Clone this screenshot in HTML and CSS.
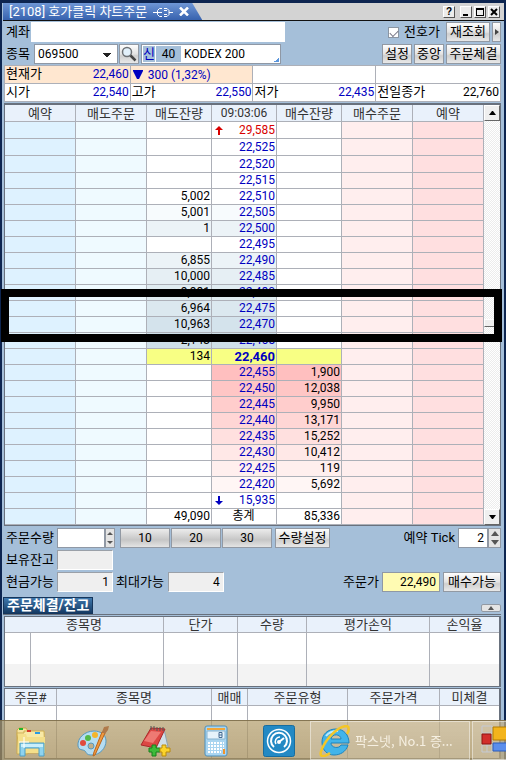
FILE: index.html
```
<!DOCTYPE html>
<html lang="ko">
<head>
<meta charset="utf-8">
<title>[2108] 호가클릭 차트주문</title>
<link rel="stylesheet" href="styles.css">
</head>
<body>
<main class="window">
  <header class="titlebar">
    <div class="tab">
      <h1>[2108] 호가클릭 차트주문</h1>
      <svg class="plug" viewBox="0 0 20 12" width="20" height="12" fill="none" stroke="#fff"><path d="M0 6.500h4M9 2.500H6.500L4.500 4.500v4l2 2H9M9 6.500H5M11 2.500h3l2 2v4l-2 2h-3M11 4.500h3M11 8.500h3M16 6.500h4"/></svg>
      <button class="tab-close" aria-label="탭 닫기"><svg viewBox="0 0 10 9" width="10" height="9" stroke="#fff" stroke-width="2.500"><path d="M1 0.500l8 8M9 0.500l-8 8"/></svg></button>
    </div>
    <div class="winbuttons">
      <button class="wb help" aria-label="도움말">?</button>
      <button class="wb" aria-label="최소화"><svg viewBox="0 0 10 10" width="10" height="10"><path d="M2 7h5v2H2z"/></svg></button>
      <button class="wb" aria-label="최대화"><svg viewBox="0 0 10 10" width="10" height="10"><path d="M1 1h8v8H1zM2 3v5h6V3z" fill-rule="evenodd"/></svg></button>
      <button class="wb" aria-label="닫기"><svg viewBox="0 0 10 10" width="10" height="10" stroke="#000" stroke-width="2"><path d="M2 2l6 6M8 2l-6 6"/></svg></button>
    </div>
  </header>

  <section class="search">
    <div class="line">
      <label class="w-short" for="acct">계좌</label>
      <input id="acct" class="account" type="text">
      <span class="spacer"></span>
      <label class="check"><input type="checkbox" checked>전호가</label>
      <button class="btn b3">재조회</button>
      <button class="btn more" aria-label="더보기"><svg viewBox="0 0 4 6" width="4" height="6"><path d="M0 0l4 3-4 3z" fill="#444"/></svg></button>
    </div>
    <div class="line">
      <label class="w-code" for="code">종목</label>
      <select id="code" class="code"><option>069500</option></select>
      <button class="btn find" aria-label="종목 찾기"><svg viewBox="0 0 18 18" width="18" height="18"><circle cx="7" cy="7" r="4.500" fill="#e2f0fa" stroke="#6e7276" stroke-width="1.500"/><path d="M10.500 10.500l5 5" stroke="#444" stroke-width="2.500"/></svg></button>
      <div class="stock"><span class="kind">신</span><span class="margin">40</span><span>KODEX 200</span></div>
      <span class="spacer"></span>
      <button class="btn b2">설정</button>
      <button class="btn b2">중앙</button>
      <button class="btn b4">주문체결</button>
    </div>
  </section>

  <dl class="quote">
    <div class="q cream"><dt>현재가</dt><dd>22,460</dd></div>
    <div class="q cream start"><svg viewBox="0 0 10 9" width="10" height="9"><path d="M0 0h10v1L6 9H4L0 1z" fill="#0000c0"/></svg><dd>300 (1,32%)</dd></div>
    <div class="q"></div>
    <div class="q"></div>
    <div class="q"><dt>시가</dt><dd>22,540</dd></div>
    <div class="q"><dt>고가</dt><dd>22,550</dd></div>
    <div class="q"><dt>저가</dt><dd>22,435</dd></div>
    <div class="q"><dt>전일종가</dt><dd class="black">22,760</dd></div>
  </dl>

  <section class="ladder">
    <table class="book">
      <colgroup><col class="c71"><col class="c71"><col class="c65"><col class="c65"><col class="c65"><col class="c71"><col class="c71"></colgroup>
      <thead><tr><th>예약</th><th>매도주문</th><th>매도잔량</th><th class="time">09:03:06</th><th>매수잔량</th><th>매수주문</th><th>예약</th></tr></thead>
      <tbody>
        <tr class="tall"><td></td><td></td><td></td><td class="up"><svg viewBox="0 0 8 9" width="8" height="9"><path d="M4 0l4 4H5v5H3V4H0z" fill="#d80000"/></svg>29,585</td><td></td><td></td><td></td></tr>
        <tr class="tall"><td></td><td></td><td></td><td>22,525</td><td></td><td></td><td></td></tr>
        <tr class="tall"><td></td><td></td><td></td><td>22,520</td><td></td><td></td><td></td></tr>
        <tr><td></td><td></td><td></td><td>22,515</td><td></td><td></td><td></td></tr>
        <tr><td></td><td></td><td>5,002</td><td>22,510</td><td></td><td></td><td></td></tr>
        <tr class="s1"><td></td><td></td><td>5,001</td><td>22,505</td><td></td><td></td><td></td></tr>
        <tr class="s2"><td></td><td></td><td>1</td><td>22,500</td><td></td><td></td><td></td></tr>
        <tr><td></td><td></td><td></td><td>22,495</td><td></td><td></td><td></td></tr>
        <tr class="s2"><td></td><td></td><td>6,855</td><td>22,490</td><td></td><td></td><td></td></tr>
        <tr class="s3"><td></td><td></td><td>10,000</td><td>22,485</td><td></td><td></td><td></td></tr>
        <tr class="s4"><td></td><td></td><td>9,981</td><td>22,480</td><td></td><td></td><td></td></tr>
        <tr class="s5"><td></td><td></td><td>6,964</td><td>22,475</td><td></td><td></td><td></td></tr>
        <tr class="s6"><td></td><td></td><td>10,963</td><td>22,470</td><td></td><td></td><td></td></tr>
        <tr class="s7"><td></td><td></td><td>2,143</td><td>22,465</td><td></td><td></td><td></td></tr>
        <tr class="now"><td></td><td></td><td>134</td><td>22,460</td><td></td><td></td><td></td></tr>
        <tr class="b1"><td></td><td></td><td></td><td>22,455</td><td>1,900</td><td></td><td></td></tr>
        <tr class="b2nd"><td></td><td></td><td></td><td>22,450</td><td>12,038</td><td></td><td></td></tr>
        <tr class="b3rd"><td></td><td></td><td></td><td>22,445</td><td>9,950</td><td></td><td></td></tr>
        <tr class="b4th"><td></td><td></td><td></td><td>22,440</td><td>13,171</td><td></td><td></td></tr>
        <tr class="b5th"><td></td><td></td><td></td><td>22,435</td><td>15,252</td><td></td><td></td></tr>
        <tr class="b6th"><td></td><td></td><td></td><td>22,430</td><td>10,412</td><td></td><td></td></tr>
        <tr class="b7th"><td></td><td></td><td></td><td>22,425</td><td>119</td><td></td><td></td></tr>
        <tr class="b8th"><td></td><td></td><td></td><td>22,420</td><td>5,692</td><td></td><td></td></tr>
        <tr><td></td><td></td><td></td><td><svg viewBox="0 0 8 9" width="8" height="9"><path d="M4 9l4-4H5V0H3v5H0z" fill="#0000c0"/></svg>15,935</td><td></td><td></td><td></td></tr>
        <tr class="total"><td></td><td></td><td>49,090</td><td>총계</td><td>85,336</td><td></td><td></td></tr>
      </tbody>
    </table>
    <div class="scroll">
      <button class="sb" aria-label="위로"><svg viewBox="0 0 7 4" width="7" height="4"><path d="M3 0h1l3 4H0z"/></svg></button>
      <span class="thumb"></span>
      <button class="sb" aria-label="아래로"><svg viewBox="0 0 7 4" width="7" height="4"><path d="M0 0h7L4 4H3z"/></svg></button>
    </div>
    <div class="marker"></div>
  </section>

  <section class="order">
    <div class="line">
      <label class="w-label" for="qty">주문수량</label>
      <input id="qty" class="field qty" type="text">
      <span class="spin"><button aria-label="수량 증가"><svg viewBox="0 0 6 3" width="6" height="3"><path d="M3 0l3 3H0z"/></svg></button><button aria-label="수량 감소"><svg viewBox="0 0 6 3" width="6" height="3"><path d="M0 0h6L3 3z"/></svg></button></span>
      <span class="presets"><button class="btn">10</button><button class="btn">20</button><button class="btn">30</button></span>
      <button class="btn b4 after">수량설정</button>
      <span class="spacer"></span>
      <label class="w-gap" for="tick">예약 Tick</label>
      <input id="tick" class="field tick" type="text" value="2">
      <span class="spin big"><button aria-label="Tick 증가"><svg viewBox="0 0 8 5" width="8" height="5"><path d="M4 0l4 5H0z"/></svg></button><button aria-label="Tick 감소"><svg viewBox="0 0 8 5" width="8" height="5"><path d="M0 0h8L4 5z"/></svg></button></span>
    </div>
    <div class="line">
      <label class="w-label" for="held">보유잔고</label>
      <input id="held" class="field gray" type="text" readonly>
    </div>
    <div class="line">
      <label class="w-label" for="cash">현금가능</label>
      <input id="cash" class="field gray" type="text" value="1" readonly>
      <label class="w-max" for="max">최대가능</label>
      <input id="max" class="field gray" type="text" value="4" readonly>
      <span class="spacer"></span>
      <label class="w-gap" for="price">주문가</label>
      <input id="price" class="field price" type="text" value="22,490">
      <button class="btn buy">매수가능</button>
    </div>
  </section>

  <section class="balance">
    <div class="subhead">
      <h2>주문체결/잔고</h2>
      <button class="fold" aria-label="접기"><svg viewBox="0 0 6 4" width="6" height="4"><path d="M3 0l3 4H0z" fill="#555"/></svg></button>
    </div>
    <table class="list">
      <colgroup><col class="p26"><col class="p133"><col class="p74"><col class="p69"><col class="p123"><col class="p69"></colgroup>
      <thead><tr><th colspan="2">종목명</th><th>단가</th><th>수량</th><th>평가손익</th><th>손익율</th></tr></thead>
      <tbody>
        <tr class="r1"><td></td><td></td><td></td><td></td><td></td><td></td></tr>
        <tr class="r2"><td></td><td></td><td></td><td></td><td></td><td></td></tr>
      </tbody>
    </table>
    <table class="list orders">
      <colgroup><col class="p52"><col class="p155"><col class="p36"><col class="p100"><col class="p92"><col class="p59"></colgroup>
      <thead><tr><th>주문#</th><th>종목명</th><th>매매</th><th>주문유형</th><th>주문가격</th><th>미체결</th></tr></thead>
      <tbody><tr class="r3"><td></td><td></td><td></td><td></td><td></td><td></td></tr></tbody>
    </table>
  </section>
</main>

<nav class="taskbar">
  <button class="app" aria-label="파일 탐색기">
    <svg viewBox="0 0 32 32" width="32" height="32"><path d="M2 5l2-2h7l2 3v23H2z" fill="#f5e3a0" stroke="#c9a94e"/><path d="M9 6h20l1 22H4L2 8h7z" fill="#f8e9a6" stroke="#cfae50"/><path d="M3 9h8l1 3h18v16H3z" fill="#f4df8a"/><path d="M4 3h4v2H4z" fill="#22b52c"/><path d="M12 5h4v2h-4z" fill="#d8392b"/><path d="M20 7h5v2h-5z" fill="#2a9be0"/><path d="M5 18h24v13h-5v-8H10v8H5z" fill="#8fd3ee" stroke="#4e9fc4"/><path d="M6 19h22v3H6z" fill="#c9effb"/><path d="M9 12v11M4 17h10" stroke="#fff"/></svg>
  </button>
  <button class="app" aria-label="그림판">
    <svg viewBox="0 0 32 32" width="32" height="32"><path d="M17 6C8 6 0 13 1 21c1 5 5 3 7 5s1 4 7 4c8 0 14-7 14-14 0-6-5-10-12-10zm-3 12a3 3 0 110 6 3 3 0 010-6z" fill="#b5ddf2" stroke="#5798bd" fill-rule="evenodd"/><circle cx="6" cy="18" r="3" fill="#e04a3c"/><circle cx="11" cy="13" r="3" fill="#54b948"/><circle cx="18" cy="10" r="3" fill="#f4b52b"/><path d="M28 8l-10 22-2 1 1-4 8-20z" fill="#f19a3e" stroke="#b8651e"/><path d="M25 7l2-5 5-1-1 4-3 4z" fill="#b07a4a"/></svg>
  </button>
  <button class="app" aria-label="메모">
    <svg viewBox="0 0 32 32" width="32" height="32"><path d="M25 4l4 18-9 5-9-3z" fill="#cfdfe8" stroke="#8ba3b1"/><path d="M12 3l14 1-9 19-15-3z" fill="#dc4743" stroke="#a9282a"/><path d="M12 6l10 1-8 11-9-2z" fill="#ee7a73"/><path d="M12 1v4M15 1v4M18 2v4M21 2v4M24 2v4" stroke="#555"/><path d="M13 20h4v3h4v4h-4v4h-4v-4h-3v-4h3z" fill="#3dbb3a" stroke="#17801c"/><path d="M23 20h4v3h4v4h-4v4h-4v-4h-2v-4h2z" fill="#fbd42b" stroke="#b98b0d"/></svg>
  </button>
  <button class="app" aria-label="계산기">
    <svg viewBox="0 0 32 32" width="32" height="32"><rect x="4" y="1" width="22" height="30" rx="2" fill="#a9d5f0" stroke="#4d8fba"/><path d="M6 3h18v2H6z" fill="#f0a63a"/><path d="M6 6h18v8H6z" fill="#e6f3fb" stroke="#86b3d0"/><path d="M18 7.500h3v5h-3zM18 10h3" fill="none" stroke="#456b93"/><path d="M7 18h16M7 21h16M7 24h16M7 27h13" stroke="#fff" stroke-width="2" stroke-dasharray="2 1"/><path d="M22 24h2v5h-2z" fill="#f0932a"/></svg>
  </button>
  <button class="app" aria-label="성능 측정">
    <svg viewBox="0 0 32 32" width="32" height="32"><rect x="0.500" y="0.500" width="31" height="31" rx="2" fill="#2389c4" stroke="#176d9f"/><circle cx="16" cy="16" r="11.500" fill="none" stroke="#fff" stroke-width="1.500"/><path d="M11 22a8 8 0 1110 0" fill="none" stroke="#fff" stroke-width="2"/><path d="M13 19a4.500 4.500 0 014-7" fill="none" stroke="#fff" stroke-width="1.500"/><path d="M16 17l5-4" stroke="#fff" stroke-width="2"/><circle cx="16" cy="17" r="2" fill="#fff"/></svg>
  </button>
  <button class="task">
    <svg viewBox="0 0 32 32" width="32" height="32"><path d="M30 18H12c0 5 8 6 10 2h7c-2 7-8 10-14 10C8 30 3 25 3 17S9 4 17 4c8 0 13 6 13 14zM12 14h10c0-5-9-6-10 0z" fill="#42b4ea" stroke="#1d83bd" fill-rule="evenodd"/><path d="M7 11c3-4 7-5 12-5" stroke="#bdeafd" stroke-width="2" fill="none"/><path d="M11 28C4 33-1 32 3 24 7 14 18 2 27 1c4 0 3 5 1 8" stroke="#f4c628" stroke-width="2.500" fill="none"/></svg>
    <span>팍스넷, No.1 증...</span>
  </button>
  <button class="task cut" aria-label="프로그램">
    <svg viewBox="0 0 32 32" width="32" height="32"><path d="M1 1h10v7H1zM1 20h10v7H1zM6 20v7" fill="none" stroke="#c5cad4"/><path d="M1 9h9v10H1z" fill="#d22f2b" stroke="#8d1513"/><path d="M12 2h16v13H12z" fill="#f3b41c" stroke="#b27d05"/><path d="M12 18h16v8H12z" fill="#5b8eec" stroke="#2d5cbb"/></svg>
  </button>
</nav>
</body>
</html>
```
FILE: styles.css
```
* { box-sizing: border-box; }
body {
  margin: 0;
  overflow: hidden;
  background: #a5bfd9;
  color: #000;
  font: 13px/16px Roboto, "Noto Sans CJK KR", sans-serif;
}
button, input, select { font: inherit; color: inherit; margin: 0; padding: 0; border-radius: 0; }
h1, h2, dl, dt, dd { margin: 0; font: inherit; }
svg { display: block; flex: none; }

.window {
  min-height: 100vh;
  padding: 0 3px 0 2px;
  border: solid #0d2550;
  border-width: 3px 2px 0;
}

/* title bar */
.titlebar {
  display: flex;
  justify-content: space-between;
  align-items: center;
  height: 18px;
  margin: 0 -3px 0 -1px;
  background: #d3d3d3;
  border-bottom: 1px solid #111;
}
.tab {
  display: flex;
  align-items: center;
  height: 17px;
  padding: 0 13px 0 6px;
  color: #fff;
  background: linear-gradient(#6f97d6, #3762ae);
  clip-path: polygon(0 0, calc(100% - 10px) 0, 100% 100%, 0 100%);
}
.tab h1 { white-space: nowrap; }
.plug { margin: 0 6px; }
.tab-close { border: 0; background: none; }
.winbuttons { display: flex; gap: 2px; padding-right: 4px; }
.wb {
  display: grid;
  place-items: center;
  width: 12px;
  height: 12px;
  background: #ececec;
  border: 1px solid;
  border-color: #fff #555 #555 #fff;
}
.wb.help { margin-right: 3px; font: bold 10px/10px "Liberation Sans", sans-serif; }

/* rows of controls */
.line { display: flex; height: 20px; align-items: center; white-space: nowrap; }
.search { display: grid; gap: 2px; padding: 1px 0 1px 2px; }
.spacer { flex: 1; }
.w-short { width: 25px; }
.w-code { width: 28px; }
.account { width: 254px; height: 20px; border: 0; background: #fff; }
.check { display: flex; align-items: center; gap: 5px; margin-right: 6px; }
.check input {
  appearance: none;
  display: grid;
  place-items: center;
  width: 11px;
  height: 11px;
  border: 1px solid #8b96a3;
  background: #fff;
}
.check input:checked::before {
  content: "";
  width: 7px;
  height: 4px;
  border: solid #778;
  border-width: 0 0 1px 1px;
  transform: rotate(-45deg);
}
.btn {
  height: 20px;
  border: 1px solid #9299a3;
  background: linear-gradient(#fdfdfd, #e3e3e3 50%, #cfcfcf 60%, #e8e8e8);
  text-align: center;
  white-space: nowrap;
}
.b2 { width: 30px; margin-right: 2px; }
.b3 { width: 44px; margin-right: 2px; }
.b4 { width: 55px; }
.buy { width: 58px; }
.more { display: grid; place-items: center; width: 9px; }
.code {
  appearance: none;
  width: 84px;
  height: 20px;
  padding-left: 3px;
  border: 1px solid #8f98a5;
  background: #fff conic-gradient(from -45deg at 50% 100%, transparent 0) no-repeat;
  background-image: linear-gradient(45deg, transparent 50%, #222 50%), linear-gradient(-45deg, transparent 50%, #222 50%);
  background-position: 68px 8px, 72px 8px;
  background-size: 4px 4px;
  font-size: 12px;
}
.find { display: grid; place-items: center; width: 20px; margin: 0 2px 0 1px; }
.stock {
  display: flex;
  align-items: center;
  width: 140px;
  height: 20px;
  border: 1px solid #8f98a5;
  background: linear-gradient(135deg, transparent 50%, #5b96dd 50%) right 1px bottom 1px / 5px 5px no-repeat, #fff;
  font-size: 12px;
}
.stock span { height: 16px; }
.stock .kind { width: 12px; margin-left: 1px; background: #a5bfd9; color: #0000c0; font-size: 13px; }
.margin { width: 25px; margin: 0 3px 0 1px; background: #a5bfd9; text-align: center; }

/* quote summary */
.quote {
  display: grid;
  grid-template-columns: 126fr 123fr 123fr 125fr;
  gap: 1px;
  padding: 1px;
  background: #adb0b8;
}
.q {
  display: flex;
  justify-content: space-between;
  height: 17px;
  padding: 0 1px;
  background: #fff;
  color: #0000c0;
}
.q dd { font-size: 12px; }
.q dt, .black { color: #000; }
.cream { background: #ffe7d0; }
.start { justify-content: flex-start; align-items: center; gap: 5px; padding-left: 2px; }

/* price ladder */
.ladder {
  position: relative;
  display: flex;
  margin-top: 1px;
  border: 1px solid #69717d;
  border-top-width: 2px;
}
table { border-collapse: separate; border-spacing: 0; table-layout: fixed; }
.book { flex: 1; width: 0; }
th, td { padding: 0; border: solid #adb0b8; border-width: 0 1px 1px 0; line-height: 15px; }
th { height: 17px; background: #e9f1fb; color: #333; font-weight: normal; white-space: nowrap; }
.time { font-size: 12px; }
.book td { height: 16px; padding-right: 1px; background: #fff; text-align: right; font-size: 12px; }
.book .tall td { height: 17px; }
.c71 { width: 71px; }
.c65 { width: 65px; }
.book td:nth-child(1) { background: #def2ff; }
.book td:nth-child(2) { background: #effaff; }
.book td:nth-child(4) { color: #0000c0; }
.book td:nth-child(6) { background: #ffeeee; }
.book td:nth-child(7) { background: #ffdfe0; }
.book td.up:nth-child(4) { color: #d80000; }
.book td svg { float: left; margin: 3px 0 0 3px; }
.s1 td:nth-child(n+3):nth-child(-n+4) { background: #f7fbfd; }
.s2 td:nth-child(n+3):nth-child(-n+4) { background: #ecf3f7; }
.s3 td:nth-child(n+3):nth-child(-n+4) { background: #e6eff4; }
.s4 td:nth-child(n+3):nth-child(-n+4) { background: #e0ecf1; }
.s5 td:nth-child(n+3):nth-child(-n+4) { background: #dbe8ef; }
.s6 td:nth-child(n+3):nth-child(-n+4) { background: #d4e3ec; }
.s7 td:nth-child(n+3):nth-child(-n+4) { background: #cedfe9; }
.now td:nth-child(n+3):nth-child(-n+5) { background: #f8ff84; }
.book .now td:nth-child(4) { font-weight: bold; font-size: 13px; }
.b1 td:nth-child(n+4):nth-child(-n+5) { background: #ffbfbf; }
.b2nd td:nth-child(n+4):nth-child(-n+5) { background: #ffc6c5; }
.b3rd td:nth-child(n+4):nth-child(-n+5) { background: #ffcdcc; }
.b4th td:nth-child(n+4):nth-child(-n+5) { background: #ffd6d5; }
.b5th td:nth-child(n+4):nth-child(-n+5) { background: #ffe0df; }
.b6th td:nth-child(n+4):nth-child(-n+5) { background: #ffe8e7; }
.b7th td:nth-child(n+4):nth-child(-n+5) { background: #ffefee; }
.b8th td:nth-child(n+4):nth-child(-n+5) { background: #fff6f5; }
.book .total td:nth-child(4) { color: #000; text-align: center; }
.scroll {
  display: flex;
  flex-direction: column;
  justify-content: space-between;
  width: 16px;
  background: repeating-conic-gradient(#fff 0 25%, #ececec 0 50%) 0 0 / 2px 2px;
}
.sb, .thumb {
  display: grid;
  place-items: center;
  width: 16px;
  height: 16px;
  background: #efefef;
  border: 1px solid;
  border-color: #fff #666 #666 #fff;
}
.thumb { height: 8px; margin-top: 16px; }
.marker {
  position: absolute;
  top: 184px;
  left: -4px;
  right: -2px;
  height: 53px;
  border: 8px solid #000;
}

/* order entry */
.order { display: grid; gap: 2px; padding: 2px 0 5px 2px; }
.w-label { width: 51px; }
.w-max { margin: 0 4px 0 3px; }
.w-gap { margin-right: 3px; }
.field {
  width: 56px;
  height: 20px;
  padding: 0 3px;
  border: 1px solid #8f98a5;
  background: #fff;
  font-size: 12px;
  text-align: right;
}
.gray { background: #efefef; border-color: #9aa0a8 #fff #fff #9aa0a8; }
.qty { width: 48px; }
.tick { width: 30px; }
.price { width: 58px; margin-right: 3px; background: #fffbb3; }
.spin { display: grid; width: 10px; height: 20px; margin-right: 5px; border: 1px solid #9299a3; }
.spin button { display: grid; place-items: center; border: 0; background: #e4e4e4; }
.spin path { fill: #555; }
.spin.big { width: 13px; margin-right: 0; }
.presets { display: flex; gap: 1px; }
.presets .btn { width: 50px; background: linear-gradient(#ececec, #c6c6c6 60%, #e4e4e4); font-size: 12px; }
.after { margin-left: 3px; }

/* balances */
.subhead { display: flex; justify-content: space-between; align-items: flex-end; height: 18px; margin-left: -1px; border-bottom: 1px solid #69717d; }
h2 {
  height: 17px;
  padding: 0 3px;
  border: 1px solid #16365c;
  background: linear-gradient(#3f78ad, #153a63);
  color: #fff;
  font-size: 14px;
  font-weight: bold;
  line-height: 15px;
}
.fold {
  display: grid;
  place-items: center;
  width: 20px;
  height: 8px;
  margin-bottom: 2px;
  border: 1px solid #9299a3;
  border-radius: 2px;
  background: #e4e4e4;
}
.list { width: 100%; margin-top: 1px; border: 1px solid #69717d; border-right-width: 2px; background: #fff; }
.list th { height: 16px; }
.list th:last-child, .list td:last-child { border-right: 0; }
.list td { border-bottom: 0; }
.r1 td { height: 31px; }
.r2 td { height: 22px; background: #f3f3f3; }
.r3 td { height: 52px; }
.list.orders th { height: 17px; }
.p26 { width: 26px; } .p133 { width: 133px; } .p74 { width: 74px; } .p69 { width: 69px; } .p123 { width: 123px; }
.p52 { width: 52px; } .p155 { width: 155px; } .p36 { width: 36px; } .p100 { width: 100px; } .p92 { width: 92px; } .p59 { width: 59px; }

/* taskbar over the bottom of the window */
.taskbar {
  position: fixed;
  left: 0;
  right: 0;
  bottom: 0;
  display: flex;
  height: 40px;
  overflow: hidden;
  border-top: 1px solid rgba(120, 105, 70, .8);
  background: linear-gradient(rgba(178, 156, 105, .7), rgba(165, 142, 92, .75));
}
.app { display: grid; place-items: center; flex: none; width: 62px; border: 0; background: none; }
.task {
  display: flex;
  flex: none;
  align-items: center;
  width: 160px;
  padding: 0 8px;
  border: 1px solid rgba(255, 255, 255, .45);
  background: rgba(255, 255, 255, .15);
  color: #f6f0e2;
  gap: 4px;
  font: 13px/16px "Noto Sans CJK KR", sans-serif;
  white-space: nowrap;
}
.cut { margin-left: 2px; }
```
